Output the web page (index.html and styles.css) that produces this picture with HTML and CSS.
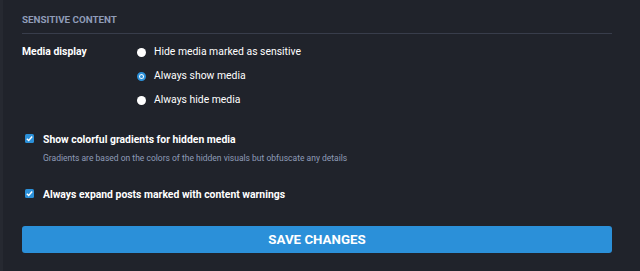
FILE: index.html
```html
<!DOCTYPE html>
<html>
<head>
<meta charset="utf-8">
<link rel="stylesheet" href="styles.css">
</head>
<body>
<div class="page">
  <div class="edge"></div>
  <div class="content">
    <h4 class="heading">SENSITIVE CONTENT</h4>
    <div class="field-row">
      <div class="field-label">Media display</div>
      <div class="radios">
        <label class="radio"><span class="dot"></span>Hide media marked as sensitive</label>
        <label class="radio"><span class="dot checked"></span>Always show media</label>
        <label class="radio"><span class="dot"></span>Always hide media</label>
      </div>
    </div>
    <div class="check-row first">
      <label class="check"><span class="box"><svg viewBox="0 0 10 10" width="9" height="9"><path d="M2 5.2 L4.1 7.2 L8 2.8" fill="none" stroke="#fff" stroke-width="1.6"/></svg></span>Show colorful gradients for hidden media</label>
      <div class="hint">Gradients are based on the colors of the hidden visuals but obfuscate any details</div>
    </div>
    <div class="check-row second">
      <label class="check"><span class="box"><svg viewBox="0 0 10 10" width="9" height="9"><path d="M2 5.2 L4.1 7.2 L8 2.8" fill="none" stroke="#fff" stroke-width="1.6"/></svg></span>Always expand posts marked with content warnings</label>
    </div>
    <button class="save">SAVE CHANGES</button>
  </div>
</div>
</body>
</html>
```

FILE: styles.css
```css
html, body {
  margin: 0;
  padding: 0;
  background: #20232b;
}
body {
  width: 640px;
  height: 271px;
  overflow: hidden;
  font-family: Roboto, "Liberation Sans", sans-serif;
  color: #fff;
}
.page {
  display: flex;
  height: 271px;
}
.edge {
  width: 3px;
  background: #262931;
}
.content {
  flex: 1;
  padding: 0 28px 0 19px;
}
.heading {
  margin: 14px 0 0;
  font-size: 9.8px;
  font-weight: 700;
  color: #8f9cb8;
  line-height: 12px;
  padding-bottom: 7px;
  border-bottom: 1px solid #383d4b;
}
.field-row {
  display: flex;
  margin-top: 11px;
}
.field-label {
  width: 115px;
  font-size: 10.4px;
  font-weight: 700;
  line-height: 14px;
}
.radios {
  display: flex;
  flex-direction: column;
  gap: 10px;
}
.radio {
  display: flex;
  align-items: center;
  font-size: 10.4px;
  line-height: 14px;
  color: #fff;
}
.dot {
  width: 9px;
  height: 9px;
  border-radius: 50%;
  background: #fff;
  margin-right: 8px;
  box-sizing: border-box;
}
.dot.checked {
  background: #fff;
  border: 2px solid #2b90d9;
  box-shadow: inset 0 0 0 1px #fff, inset 0 0 0 3px #2b90d9;
}
.check-row.first {
  margin-top: 26px;
  padding-left: 3px;
}
.check-row.second {
  margin-top: 24px;
  padding-left: 3px;
}
.check {
  display: flex;
  align-items: center;
  font-size: 10.4px;
  font-weight: 700;
  line-height: 14px;
}
.box {
  width: 9px;
  height: 9px;
  border-radius: 1.5px;
  background: #2b90d9;
  margin-right: 9px;
  margin-top: -3px;
  display: flex;
  align-items: center;
  justify-content: center;
}
.hint {
  margin-top: 5px;
  padding-left: 18px;
  font-size: 8.5px;
  line-height: 12px;
  color: #8f9cb8;
}
.save {
  display: block;
  width: 100%;
  height: 27px;
  margin-top: 24px;
  border: 0;
  border-radius: 3px;
  background: #2b90d9;
  color: #fff;
  font-family: Roboto, "Liberation Sans", sans-serif;
  font-size: 13.3px;
  font-weight: 700;
  padding: 0;
}
```
